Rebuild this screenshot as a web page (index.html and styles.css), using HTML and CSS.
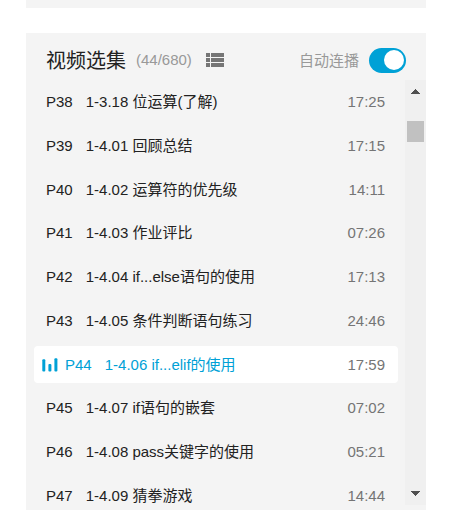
FILE: index.html
```html
<!DOCTYPE html>
<html lang="zh-CN">
<head>
<meta charset="utf-8">
<title>视频选集</title>
<link rel="stylesheet" href="styles.css">
</head>
<body>
<div class="previous-panel"></div>
<section class="playlist">
  <header class="playlist-head">
    <h1 class="title">视频选集</h1>
    <span class="count">(44/680)</span>
    <svg class="list-icon" width="18" height="14" viewBox="0 0 18 14" fill="#757575">
      <path d="M0 0h4v4H0zM5 0h13v4H5zM0 5h4v4H0zM5 5h13v4H5zM0 10h4v4H0zM5 10h13v4H5z"/>
    </svg>
    <span class="autoplay">自动连播</span>
    <span class="switch"><span class="knob"></span></span>
  </header>
  <div class="playlist-body">
    <ul class="episodes">
      <li class="episode"><span class="page">P38</span><span class="name">1-3.18 位运算(了解)</span><span class="time">17:25</span></li>
      <li class="episode"><span class="page">P39</span><span class="name">1-4.01 回顾总结</span><span class="time">17:15</span></li>
      <li class="episode"><span class="page">P40</span><span class="name">1-4.02 运算符的优先级</span><span class="time">14:11</span></li>
      <li class="episode"><span class="page">P41</span><span class="name">1-4.03 作业评比</span><span class="time">07:26</span></li>
      <li class="episode"><span class="page">P42</span><span class="name">1-4.04 if...else语句的使用</span><span class="time">17:13</span></li>
      <li class="episode"><span class="page">P43</span><span class="name">1-4.05 条件判断语句练习</span><span class="time">24:46</span></li>
      <li class="episode active">
        <svg class="playing" width="16" height="14" viewBox="0 0 16 14" fill="#00a1d6">
          <rect x="0.3" y="1.2" width="3" height="12.3" rx="1"/><rect x="6.4" y="6" width="3" height="7.5" rx="1"/><rect x="12.4" y="0.3" width="3" height="13.2" rx="1"/>
        </svg>
        <span class="page">P44</span><span class="name">1-4.06 if...elif的使用</span><span class="time">17:59</span></li>
      <li class="episode"><span class="page">P45</span><span class="name">1-4.07 if语句的嵌套</span><span class="time">07:02</span></li>
      <li class="episode"><span class="page">P46</span><span class="name">1-4.08 pass关键字的使用</span><span class="time">05:21</span></li>
      <li class="episode"><span class="page">P47</span><span class="name">1-4.09 猜拳游戏</span><span class="time">14:44</span></li>
    </ul>
    <div class="scrollbar">
      <svg class="arrow" width="9" height="5" viewBox="0 0 9 5" fill="#505050" shape-rendering="crispEdges"><path d="M4 0h1v1h1v1h1v1h1v1h1v1H0V4h1V3h1V2h1V1h1z"/></svg>
      <div class="thumb"></div>
      <svg class="arrow arrow-down" width="9" height="5" viewBox="0 0 9 5" fill="#505050" shape-rendering="crispEdges"><path d="M0 0h9v1H8v1H7v1H6v1H5v1H4V4H3V3H2V2H1V1H0z"/></svg>
    </div>
  </div>
</section>
</body>
</html>
```

FILE: styles.css
```css
* {
  box-sizing: border-box;
}

body {
  margin: 0;
  padding-left: 26px;
  background: #fff;
  color: #222;
  font: 15px/20px "Liberation Sans", "Noto Sans CJK SC", sans-serif;
}

.previous-panel {
  width: 400px;
  height: 8px;
  margin-bottom: 25px;
  background: #f4f4f4;
}

.playlist {
  width: 400px;
  height: 477px;
  background: #f4f4f4;
}

.playlist-head {
  display: flex;
  align-items: center;
  height: 47px;
  padding: 7px 20px 0;
}

.title {
  margin: 2px 10px 0 0;
  font-size: 20px;
  font-weight: 400;
  line-height: 28px;
}

.count {
  color: #999;
}

.list-icon {
  margin-left: 14px;
}

.autoplay {
  margin: 2px 0 0 auto;
  color: #999;
}

.switch {
  display: flex;
  justify-content: flex-end;
  align-items: center;
  width: 37px;
  height: 25px;
  margin-left: 10px;
  padding-right: 2px;
  border-radius: 13px;
  background: #00a1d6;
}

.knob {
  width: 20px;
  height: 20px;
  border-radius: 50%;
  background: #fff;
}

.playlist-body {
  display: flex;
  height: 425px;
}

.episodes {
  flex: 1;
  margin: 0;
  padding: 3.5px 7px 0 8px;
  overflow: hidden;
  list-style: none;
}

.episode {
  display: flex;
  align-items: center;
  height: 37px;
  margin-bottom: 6.75px;
  padding: 0 13px 0 12px;
  border-radius: 4px;
  white-space: nowrap;
}

.page {
  margin-right: 13px;
}

.time {
  margin-left: auto;
  color: #757575;
}

.active {
  padding-left: 8px;
  background: #fff;
  color: #00a1d6;
}

.playing {
  margin-right: 7px;
}

.scrollbar {
  display: flex;
  flex-direction: column;
  align-items: center;
  width: 21px;
  padding: 9px 0;
  background: #f0f0f0;
}

.thumb {
  width: 17px;
  height: 21px;
  margin-top: 27px;
  background: #c1c1c1;
}

.arrow-down {
  margin-top: auto;
}
```
